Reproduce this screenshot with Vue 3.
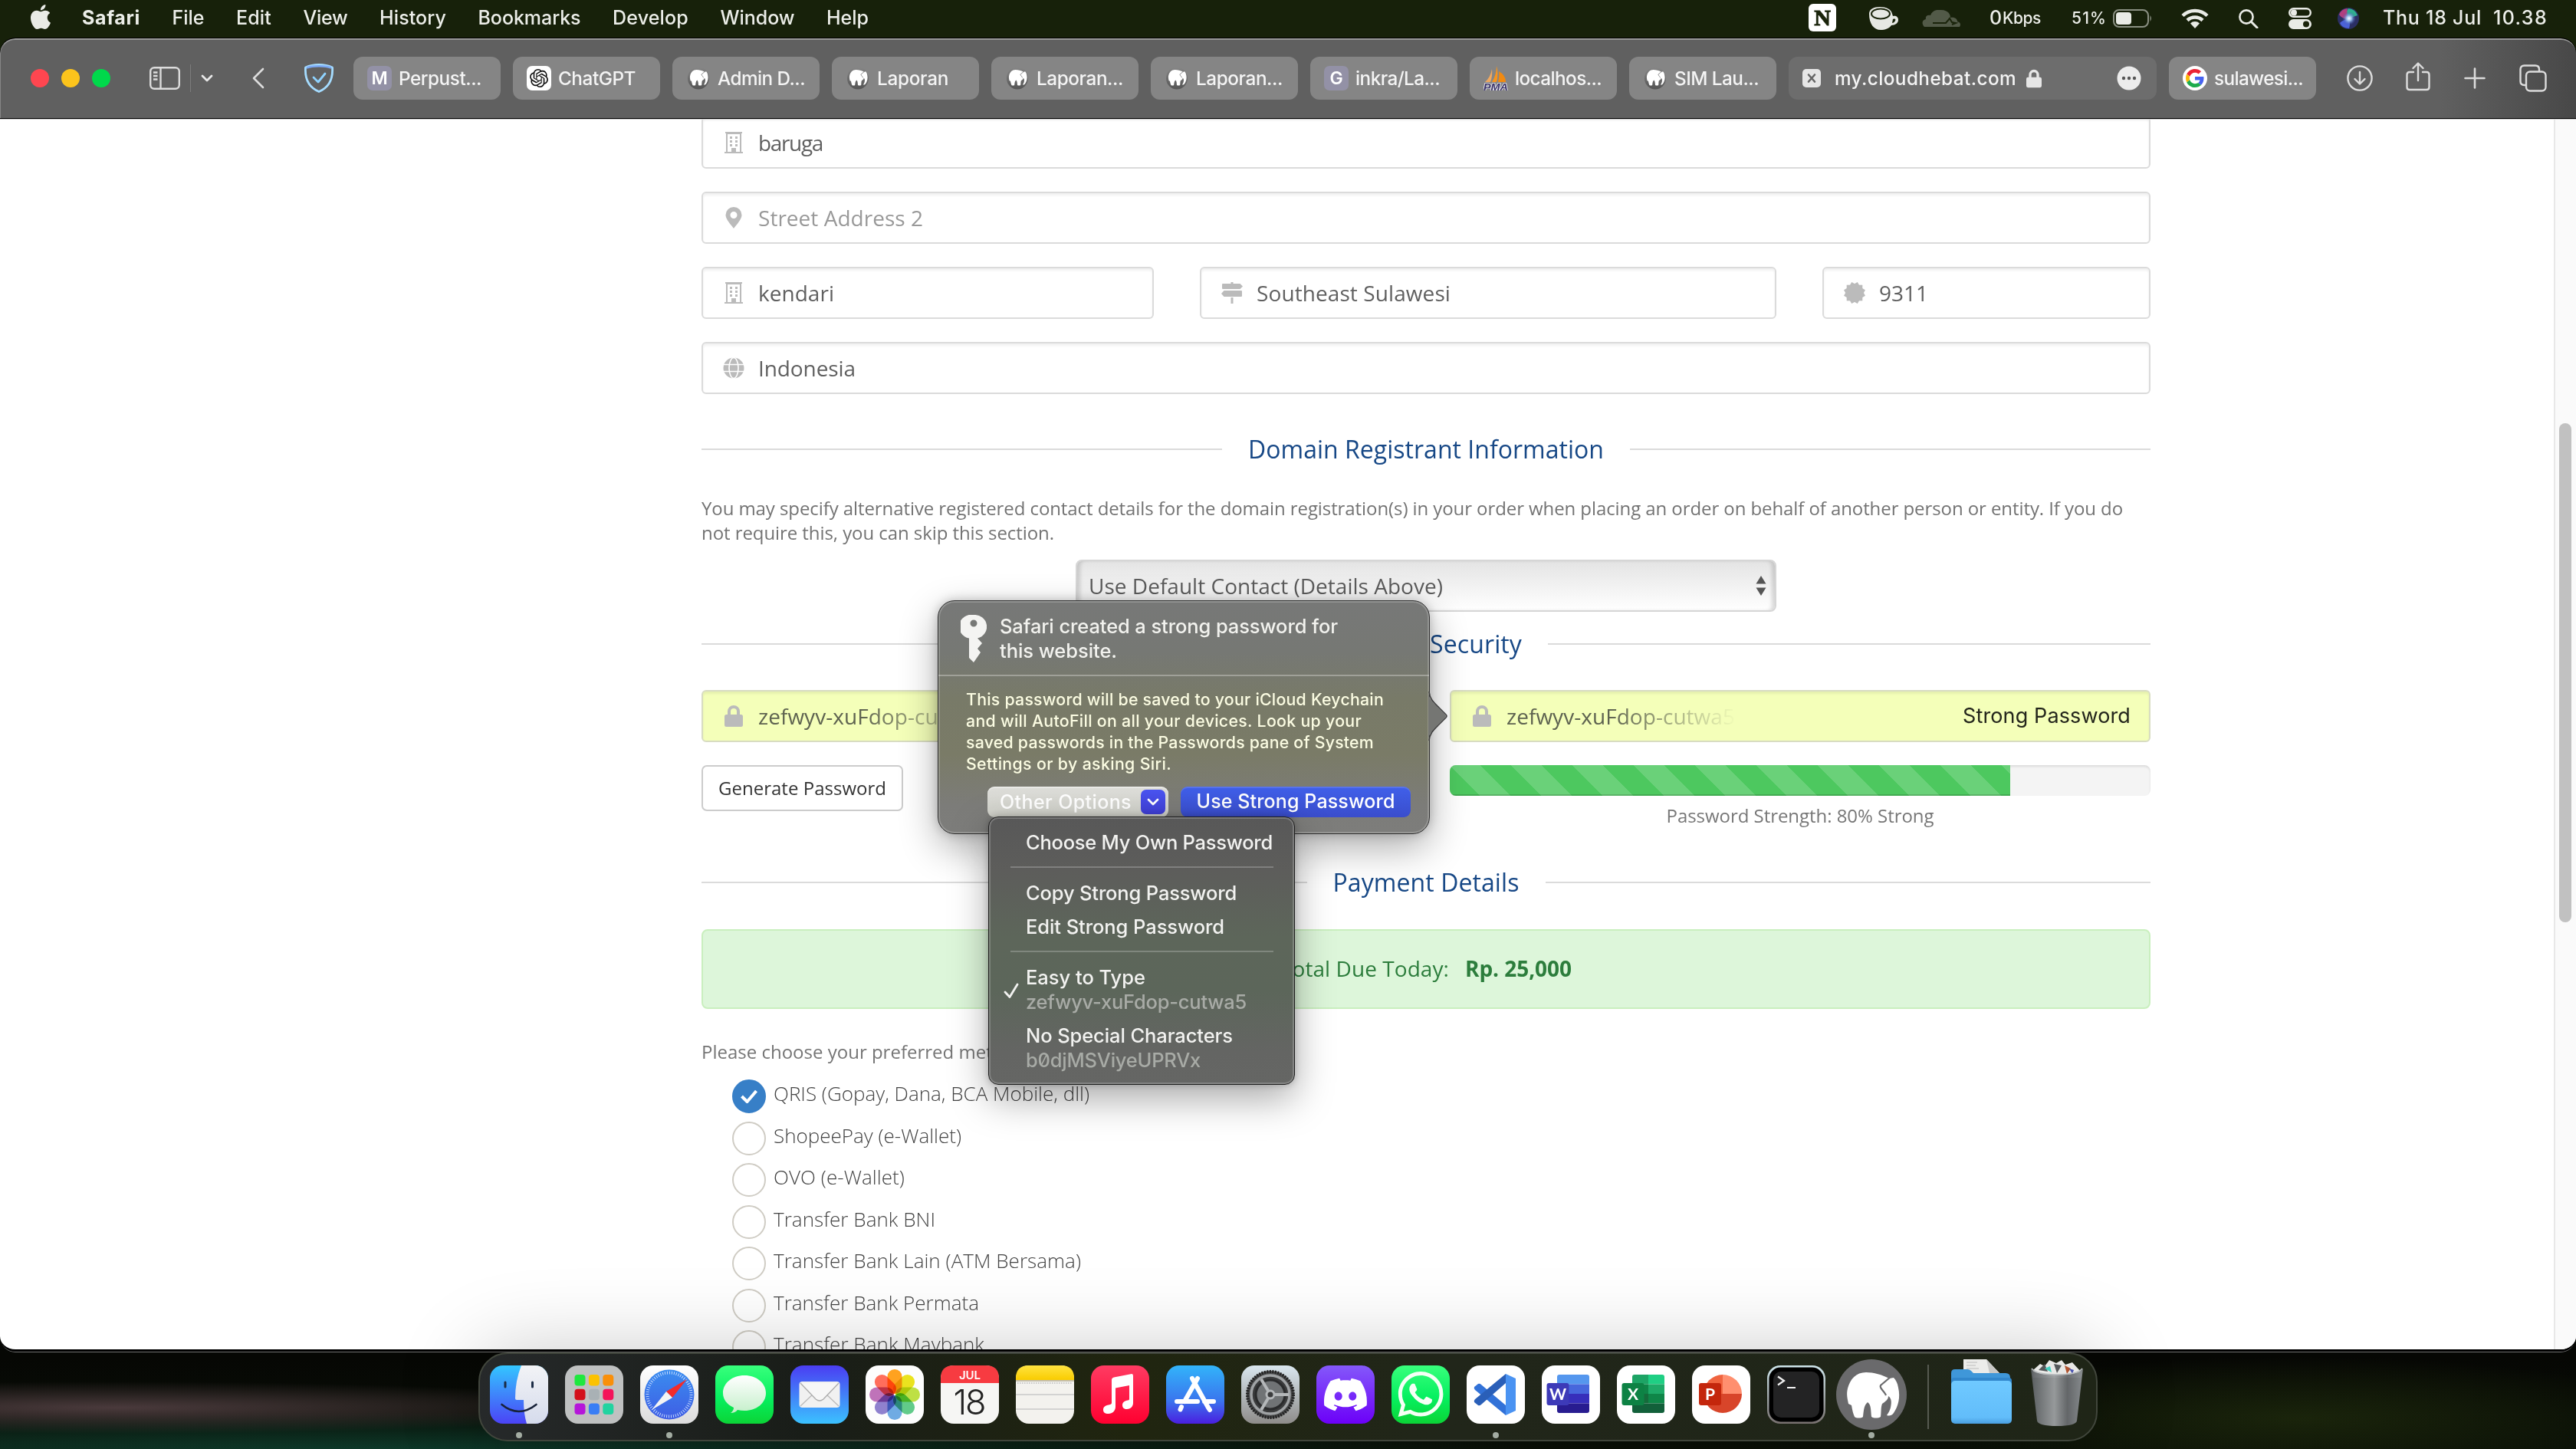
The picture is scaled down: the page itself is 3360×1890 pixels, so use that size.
<script setup>
// Tracks a text run out to a fixed width so that neighbouring items stay aligned
const vFit = {
  mounted(el, { value }) {
    el.style.letterSpacing = '0px'
    const natural = el.getBoundingClientRect().width
    const count = el.textContent.length
    el.style.letterSpacing = `${(value - natural) / count}px`
    el.style.width = `${value}px`
  }
}

const menus = [
  ['File', 42], ['Edit', 46], ['View', 58], ['History', 87], ['Bookmarks', 134],
  ['Develop', 99], ['Window', 97], ['Help', 55]
]

const tabs = [
  { icon: 'letter', letter: 'M', label: 'Perpust...', w: 108 },
  { icon: 'openai', label: 'ChatGPT', w: 101 },
  { icon: 'elephant', label: 'Admin D...', w: 114 },
  { icon: 'elephant', label: 'Laporan', w: 93 },
  { icon: 'elephant', label: 'Laporan...', w: 113 },
  { icon: 'elephant', label: 'Laporan...', w: 113 },
  { icon: 'letter', letter: 'G', label: 'inkra/La...', w: 110 },
  { icon: 'pma', label: 'localhos...', w: 113 },
  { icon: 'elephant', label: 'SIM Lau...', w: 110 }
]

const methods = [
  ['QRIS (Gopay, Dana, BCA Mobile, dll)', 412],
  ['ShopeePay (e-Wallet)', 245],
  ['OVO (e-Wallet)', 171],
  ['Transfer Bank BNI', 211],
  ['Transfer Bank Lain (ATM Bersama)', 401],
  ['Transfer Bank Permata', 268],
  ['Transfer Bank Maybank', 275]
]

const launchpad = ['#1ee83e', '#fcc200', '#f98f0a', '#d3101a', '#a9b1b5', '#f4135a', '#b516d9', '#3a7ef5', '#21d3a0']
const petals = ['#ff9500', '#e8e000', '#b5dc2a', '#4cc47a', '#5b9fe0', '#7f6fc8', '#b65fb0', '#ff5a45']
</script>

<template>
  <div class="desktop">
    <svg class="defs" width="0" height="0">
      <defs>
        <linearGradient id="gSilver" x2="0" y2="1"><stop stop-color="#d9e6ee" /><stop offset="1" stop-color="#8e8c8a" /></linearGradient>
        <linearGradient id="gFinder" x2="0" y2="1"><stop stop-color="#33c6ff" /><stop offset="1" stop-color="#4b43f6" /></linearGradient>
        <linearGradient id="gFace" x2="0" y2="1"><stop stop-color="#f2f3f6" /><stop offset="1" stop-color="#d5dbec" /></linearGradient>
        <linearGradient id="gWhite" x2="0" y2="1"><stop stop-color="#fff" /><stop offset="1" stop-color="#dcdcdc" /></linearGradient>
        <linearGradient id="gCompass" x2="0" y2="1"><stop stop-color="#3a8df0" /><stop offset="1" stop-color="#3f5de4" /></linearGradient>
        <linearGradient id="gGreen" x2="0" y2="1"><stop stop-color="#38ff7c" /><stop offset=".55" stop-color="#06f060" /><stop offset="1" stop-color="#0bd436" /></linearGradient>
        <linearGradient id="gBubble" x2="0" y2="1"><stop stop-color="#fff" /><stop offset="1" stop-color="#c4efca" /></linearGradient>
        <linearGradient id="gMail" x2="0" y2="1"><stop stop-color="#4a3df2" /><stop offset="1" stop-color="#3bc2ff" /></linearGradient>
        <linearGradient id="gYellow" x2="0" y2="1"><stop stop-color="#ffe340" /><stop offset="1" stop-color="#f9cc00" /></linearGradient>
        <linearGradient id="gMusic" x2="0" y2="1"><stop stop-color="#ff3b62" /><stop offset="1" stop-color="#ff0030" /></linearGradient>
        <linearGradient id="gStore" x2="0" y2="1"><stop stop-color="#32b4fa" /><stop offset=".6" stop-color="#3a76ee" /><stop offset="1" stop-color="#4a1ee0" /></linearGradient>
        <linearGradient id="gDiscord" x2="0" y2="1"><stop stop-color="#8458fa" /><stop offset="1" stop-color="#6c00f8" /></linearGradient>
        <linearGradient id="gTerm" x2="0" y2="1"><stop stop-color="#cfe6ec" /><stop offset="1" stop-color="#77706f" /></linearGradient>
        <linearGradient id="gFolder" x2="0" y2="1"><stop stop-color="#6fc9ff" /><stop offset=".85" stop-color="#62bdfa" /><stop offset="1" stop-color="#4a9fe0" /></linearGradient>
        <linearGradient id="gTrash"><stop stop-color="#5c6063" /><stop offset=".45" stop-color="#9b9ea0" /><stop offset=".7" stop-color="#66696c" /><stop offset="1" stop-color="#8b8f92" /></linearGradient>
        <linearGradient id="gFav" x2="0" y2="1"><stop stop-color="#868686" /><stop offset="1" stop-color="#545454" /></linearGradient>
        <radialGradient id="gSiri"><stop stop-color="#fff" /><stop offset=".35" stop-color="#9fc4ee" /><stop offset="1" stop-color="#3a4fb0" stop-opacity="0" /></radialGradient>
        <symbol id="elephant" viewBox="0 0 92 92">
          <path fill="#fff" d="M39 17C26 17 18 26 15 38c-2 8 0 14 1 20l4 2c1 6 2 11 4 15 2 2 9 2 11 0 1-8 1-15 6-19 5 3 4 12 5 19 3 2 9 2 12 0 1-6 0-12 2-17 4-3 8-5 8-10 5 3 4 10 3 15-1 4-3 7-5 10 3 1 6 1 9-3 6-9 9-20 6-33-1-6-3-10-6-13l-6 1c-9-5-20-8-30-8z" />
          <path fill="none" stroke="#6a6a6c" stroke-width="2.2" d="M71 23 58 34c-2 3 3 6 6 11l1 2" />
        </symbol>
        <symbol id="lock" viewBox="0 0 24 28"><path fill="currentColor" d="M4 12V8a8 8 0 0 1 16 0v4h1.500q2.500 0 2.500 2.500v11q0 2.500-2.500 2.500h-19Q0 28 0 25.500v-11Q0 12 2.500 12zm4 0h8V8a4 4 0 0 0-8 0z" /></symbol>
        <symbol id="building" viewBox="0 0 24 28"><path fill="#bbb" fill-rule="evenodd" d="M1 0h22v2h-1v24h2v2H0v-2h2V2H1zm3 3v23h5v-5h6v5h5V3zM7 6h3v3H7zm7 0h3v3h-3zM7 11h3v3H7zm7 0h3v3h-3zM7 16h3v3H7zm7 0h3v3h-3z" /></symbol>
      </defs>
    </svg>

    <header class="menubar">
      <svg class="apple" viewBox="0 0 24 24"><path fill="#e9ebe6" d="M12.152 6.896c-.948 0-2.415-1.078-3.96-1.04-2.04.027-3.91 1.183-4.961 3.014-2.117 3.675-.546 9.103 1.519 12.09 1.013 1.454 2.208 3.09 3.792 3.039 1.52-.065 2.09-.987 3.935-.987 1.831 0 2.35.987 3.96.948 1.637-.026 2.676-1.48 3.676-2.948 1.156-1.688 1.636-3.325 1.662-3.415-.039-.013-3.182-1.221-3.22-4.857-.026-3.04 2.48-4.494 2.597-4.559-1.429-2.09-3.623-2.324-4.39-2.376-2-.156-3.675 1.09-4.61 1.09zM15.53 3.83c.843-1.012 1.4-2.427 1.245-3.83-1.207.052-2.662.805-3.532 1.818-.78.896-1.454 2.338-1.273 3.714 1.338.104 2.715-.688 3.559-1.701" /></svg>
      <nav class="menus">
        <b v-fit="76" class="run">Safari</b>
        <span v-for="m in menus" :key="m[0]" v-fit="m[1]" class="run">{{ m[0] }}</span>
      </nav>
      <div class="status">
        <span class="notion">N</span>
        <svg class="cup" viewBox="0 0 40 30"><path fill="#e6e8e3" d="M2 9C2 3 8 0 16 0s15 3 16 9l1 3c4-1 7 1 7 5s-4 7-9 7c-3 4-8 6-14 6C8 30 2 22 2 9z" /><ellipse cx="17" cy="9" rx="12" ry="6.500" fill="none" stroke="#1a240b" stroke-width="2" /><path d="M33 16c3-1 4 0 3 2s-2 3-4 3z" fill="#1a240b" /></svg>
        <svg class="cloud" viewBox="0 0 50 22"><path fill="#525a48" d="M3 22c-4-4-3-9 2-10C4 8 7 6 11 7 13 1 19-1 25 0c8 0 12 5 12 10 6-1 9 2 9 5 4 1 5 4 3 7z" /><path d="M14 17h17l5-6 3 5 5 1-5 2" fill="none" stroke="#1a240b" stroke-width="2" /></svg>
        <span class="net"><span v-fit="17" class="run">0</span><small v-fit="50" class="run">Kbps</small></span>
        <small v-fit="46" class="run pct">51%</small>
        <svg class="battery" viewBox="0 0 52 24"><rect x="1" y="1" width="45" height="22" rx="7" fill="none" stroke="#8a9083" stroke-width="2" /><rect x="4" y="4" width="20" height="16" rx="4" fill="#e9ebe6" /><path d="M48.500 8q3 4 0 8z" fill="#8a9083" /></svg>
        <svg class="wifi" viewBox="0 0 36 26"><g fill="none" stroke="#e9ebe6" stroke-width="4.500"><path d="M2 9.500a23 23 0 0 1 32 0" /><path d="M8 15.500a14.500 14.500 0 0 1 20 0" /></g><path d="M18 26l-6-6.500a8.500 8.500 0 0 1 12 0z" fill="#e9ebe6" /></svg>
        <svg class="search" viewBox="0 0 26 25"><circle cx="10" cy="10" r="8.600" fill="none" stroke="#e9ebe6" stroke-width="2.600" /><path d="M16 16l8 8" stroke="#e9ebe6" stroke-width="3" stroke-linecap="round" /></svg>
        <svg class="control" viewBox="0 0 30 28"><rect x="1.200" y="1.200" width="27.600" height="10.600" rx="5.300" fill="none" stroke="#e9ebe6" stroke-width="2.400" /><circle cx="7" cy="6.500" r="4" fill="#e9ebe6" /><rect y="15" width="30" height="13" rx="6.500" fill="#e9ebe6" /><circle cx="23" cy="21.500" r="4" fill="#1a240b" /></svg>
        <svg class="siri" viewBox="0 0 28 28"><circle cx="14" cy="14" r="14" fill="#2b2f63" /><path d="M14 1a13 13 0 0 1 12 9q-8 2-12 6Q8 8 14 1z" fill="#2fae8f" /><path d="M2 9a13 13 0 0 1 11-8q-2 8 2 14Q6 15 2 9z" fill="#b0407e" /><path d="M3 20q6-6 12-4 2 6 0 11-9 0-12-7z" fill="#4b62d8" /><circle cx="15" cy="14" r="9" fill="url(#gSiri)" /></svg>
        <span v-fit="129" class="run">Thu 18 Jul</span>
        <span v-fit="71" class="run time">10.38</span>
      </div>
    </header>

    <main class="window">
      <div class="toolbar">
        <div class="lights"><i class="red" /><i class="amber" /><i class="green" /></div>
        <svg class="sidebar" viewBox="0 0 40 30"><g fill="none" stroke="#dcdcdc" stroke-width="2.400"><rect x="1.200" y="1.200" width="37.600" height="27.600" rx="5" /><path d="M14.500 1v28M5 7.500h5.500M5 12h5.500M5 16.500h5.500" /></g></svg>
        <i class="bar" />
        <svg class="chev" viewBox="0 0 16 10"><path d="M2 2l6 6 6-6" fill="none" stroke="#e8e8e8" stroke-width="2.800" stroke-linecap="round" stroke-linejoin="round" /></svg>
        <svg class="back" viewBox="0 0 16 28"><path d="M14 2L2 14l12 12" fill="none" stroke="#dcdcdc" stroke-width="2.600" stroke-linecap="round" stroke-linejoin="round" /></svg>
        <svg class="shield" viewBox="0 0 40 38"><path d="M20 1.500c6 0 12 1 17.500 3.500C38.500 20 33 31 20 36.500 7 31 1.500 20 2.500 5 8 2.500 14 1.500 20 1.500z" fill="none" stroke="#a5dcff" stroke-width="2.800" stroke-linejoin="round" /><path d="M4 5.500C12 2.500 28 2.500 36 5.500" stroke="#7ba9f5" stroke-width="2.500" fill="none" /><path d="M13 18l6 6 9-11" fill="none" stroke="#8fd3ff" stroke-width="2.800" stroke-linecap="round" stroke-linejoin="round" /></svg>

        <div class="tabs">
          <div v-for="(t, i) in tabs" :key="i" class="tab">
            <span v-if="t.icon === 'letter'" class="fav letter">{{ t.letter }}</span>
            <svg v-else-if="t.icon === 'openai'" class="fav" viewBox="0 0 32 32"><rect width="32" height="32" rx="7" fill="#fff" /><path transform="translate(4 4)" fill="#111" d="M22.2819 9.8211a5.9847 5.9847 0 0 0-.5157-4.9108 6.0462 6.0462 0 0 0-6.5098-2.9A6.0651 6.0651 0 0 0 4.9807 4.1818a5.9847 5.9847 0 0 0-3.9977 2.9 6.0462 6.0462 0 0 0 .7427 7.0966 5.98 5.98 0 0 0 .511 4.9107 6.051 6.051 0 0 0 6.5146 2.9001A5.9847 5.9847 0 0 0 13.2599 24a6.0557 6.0557 0 0 0 5.7718-4.2058 5.9894 5.9894 0 0 0 3.9977-2.9001 6.0557 6.0557 0 0 0-.7475-7.0729zm-9.022 12.6081a4.4755 4.4755 0 0 1-2.8764-1.0408l.1419-.0804 4.7783-2.7582a.7948.7948 0 0 0 .3927-.6813v-6.7369l2.02 1.1686a.071.071 0 0 1 .038.052v5.5826a4.504 4.504 0 0 1-4.4945 4.4944zm-9.6607-4.1254a4.4708 4.4708 0 0 1-.5346-3.0137l.142.0852 4.783 2.7582a.7712.7712 0 0 0 .7806 0l5.8428-3.3685v2.3324a.0804.0804 0 0 1-.0332.0615L9.74 19.9502a4.4992 4.4992 0 0 1-6.1408-1.6464zM2.3408 7.8956a4.485 4.485 0 0 1 2.3655-1.9728V11.6a.7664.7664 0 0 0 .3879.6765l5.8144 3.3543-2.0201 1.1685a.0757.0757 0 0 1-.071 0l-4.8303-2.7865A4.504 4.504 0 0 1 2.3408 7.872zm16.5963 3.8558L13.1038 8.364 15.1192 7.2a.0757.0757 0 0 1 .071 0l4.8303 2.7913a4.4944 4.4944 0 0 1-.6765 8.1042v-5.6772a.79.79 0 0 0-.407-.667zm2.0107-3.0231l-.142-.0852-4.7735-2.7818a.7759.7759 0 0 0-.7854 0L9.409 9.2297V6.8974a.0662.0662 0 0 1 .0284-.0615l4.8303-2.7866a4.4992 4.4992 0 0 1 6.6802 4.66zM8.3065 12.863l-2.02-1.1638a.0804.0804 0 0 1-.038-.0567V6.0742a4.4992 4.4992 0 0 1 7.3757-3.4537l-.142.0805L8.704 5.459a.7948.7948 0 0 0-.3927.6813zm1.0976-2.3654l2.602-1.4998 2.6069 1.4998v2.9994l-2.5974 1.4997-2.6067-1.4997Z" /></svg>
            <svg v-else-if="t.icon === 'elephant'" class="fav" viewBox="0 0 32 32"><ellipse cx="16" cy="16" rx="14" ry="14.500" fill="url(#gFav)" /><use href="#elephant" x="0" y="-1" width="32" height="32" /></svg>
            <svg v-else class="fav" viewBox="0 0 32 32"><path d="M11 4q1 9-2 17H2Q9 15 11 4z" fill="#f0a860" /><path d="M17 0q3 10 0 21h-6Q17 12 17 0z" fill="#f7941d" /><path d="M20 7q9 5 9 14H19q2-8 1-14z" fill="#f28a10" /><text x="0" y="31.500" textLength="32" lengthAdjust="spacingAndGlyphs" font-family="Liberation Sans, sans-serif" font-weight="700" font-style="italic" font-size="12.500" fill="#3b3468" stroke="#e6e6ee" stroke-width="1.600" paint-order="stroke">PMA</text></svg>
            <span v-fit="t.w" class="run">{{ t.label }}</span>
          </div>
          <div class="tab address">
            <svg class="close" viewBox="0 0 24 24"><rect width="24" height="24" rx="5" fill="#e6e6e6" /><path d="M8 7.500l8 9M16 7.500l-8 9" stroke="#666" stroke-width="2.600" stroke-linecap="round" /></svg>
            <span v-fit="237" class="run">my.cloudhebat.com</span>
            <svg class="padlock"><use href="#lock" /></svg>
            <svg class="more" viewBox="0 0 32 32"><circle cx="16" cy="16" r="15.500" fill="#ececec" /><g fill="#555"><circle cx="9" cy="16" r="2.200" /><circle cx="16" cy="16" r="2.200" /><circle cx="23" cy="16" r="2.200" /></g></svg>
          </div>
          <div class="tab">
            <svg class="fav" viewBox="0 0 32 32"><circle cx="16" cy="16" r="16" fill="#fff" /><g transform="translate(4 4) scale(.5)"><path fill="#ea2335" d="M24 9.500c3.540 0 6.710 1.220 9.210 3.600l6.850-6.850C35.900 2.380 30.470 0 24 0 14.620 0 6.510 5.380 2.560 13.220l7.980 6.190C12.430 13.720 17.740 9.500 24 9.500z" /><path fill="#4863f0" d="M46.980 24.550c0-1.570-.15-3.090-.38-4.550H24v9.020h12.940c-.58 2.960-2.260 5.480-4.780 7.180l7.730 6c4.510-4.180 7.090-10.360 7.090-17.650z" /><path fill="#fbb80a" d="M10.530 28.590c-.48-1.450-.76-2.990-.76-4.590s.27-3.140.76-4.590l-7.980-6.190C.92 16.460 0 20.120 0 24c0 3.880.92 7.540 2.560 10.780l7.970-6.190z" /><path fill="#1cab4c" d="M24 48c6.480 0 11.930-2.130 15.890-5.810l-7.730-6c-2.150 1.450-4.920 2.300-8.160 2.300-6.260 0-11.570-4.220-13.470-9.910l-7.980 6.190C6.510 42.620 14.620 48 24 48z" /></g></svg>
            <span v-fit="116" class="run">sulawesi...</span>
          </div>
        </div>

        <div class="actions">
          <svg width="34" height="34" viewBox="0 0 34 34"><g fill="none" stroke="#dcdcdc" stroke-width="2.400" stroke-linecap="round" stroke-linejoin="round"><circle cx="17" cy="17" r="15.600" /><path d="M17 9v15M10.500 18l6.500 6.500 6.500-6.500" /></g></svg>
          <svg class="share" width="32" height="38" viewBox="0 0 32 38"><g fill="none" stroke="#dcdcdc" stroke-width="2.400" stroke-linecap="round" stroke-linejoin="round"><path d="M10 13H5q-3.500 0-3.500 3.500v16Q1.500 36 5 36h22q3.500 0 3.500-3.500v-16Q30.500 13 27 13h-5M16 24V2M9.500 8L16 1.500 22.500 8" /></g></svg>
          <svg width="28" height="28" viewBox="0 0 28 28"><path d="M14 1.500v25M1.500 14h25" stroke="#dcdcdc" stroke-width="2.600" stroke-linecap="round" /></svg>
          <svg width="36" height="36" viewBox="0 0 36 36"><g fill="none" stroke="#dcdcdc" stroke-width="2.400"><rect x="9" y="9.500" width="25.500" height="25" rx="5" /><path d="M9 27H6.500Q1.500 27 1.500 22V6.500q0-5 5-5H21q5 0 5 5v3" /></g></svg>
        </div>
      </div>

      <div class="page">
        <div class="form">
          <div class="field"><svg class="ico"><use href="#building" /></svg><span v-fit="84" class="run">baruga</span></div>
          <div class="field"><svg class="ico" viewBox="0 0 24 28"><path fill="#bbb" fill-rule="evenodd" d="M12 0a10.500 10.500 0 0 1 10.500 10.500C22.500 16 15 24 12 28 9 24 1.500 16 1.500 10.500A10.500 10.500 0 0 1 12 0zm0 6a4.500 4.500 0 1 0 0 9 4.500 4.500 0 0 0 0-9z" /></svg><span v-fit="215" class="run hint">Street Address 2</span></div>
          <div class="triple">
            <div class="field"><svg class="ico"><use href="#building" /></svg><span v-fit="99" class="run">kendari</span></div>
            <div class="field"><svg class="ico wide" viewBox="0 0 28 28"><path fill="#bbb" d="M12.500 0h3v2h9l3.500 3.500L24.500 9H2Q1 9 1 8V3q0-1 1-1h10.500zM3.500 11H26q1 0 1 1v6q0 1-1 1H3.500L0 15zM12.500 20h3v8h-3z" /></svg><span v-fit="253" class="run">Southeast Sulawesi</span></div>
            <div class="field"><svg class="ico wide" viewBox="-14 -14 28 28"><g fill="#bbb"><rect x="-10.300" y="-10.300" width="20.600" height="20.600" /><rect x="-10.300" y="-10.300" width="20.600" height="20.600" transform="rotate(30)" /><rect x="-10.300" y="-10.300" width="20.600" height="20.600" transform="rotate(60)" /></g></svg><span v-fit="64" class="run">9311</span></div>
          </div>
          <div class="field"><svg class="ico wide" viewBox="0 0 28 28"><circle cx="14" cy="14" r="13.500" fill="#bbb" /><g fill="none" stroke="#fff" stroke-width="1.600"><ellipse cx="14" cy="14" rx="6" ry="13.500" /><path d="M0 9.500h28M0 18.500h28" /></g></svg><span v-fit="127" class="run">Indonesia</span></div>

          <div class="heading h1"><i /><span v-fit="464" class="run">Domain Registrant Information</span><i /></div>
          <div class="para">
            <span v-fit="1854" class="run">You may specify alternative registered contact details for the domain registration(s) in your order when placing an order on behalf of another person or entity. If you do</span>
            <span v-fit="460" class="run">not require this, you can skip this section.</span>
          </div>
          <div class="select"><span v-fit="462" class="run">Use Default Contact (Details Above)</span><svg width="14" height="26" viewBox="0 0 14 26"><path d="M7 0l6.500 10.500H.5zM7 26L.5 15.500h13z" fill="#555" /></svg></div>

          <div class="heading h2"><i /><span v-fit="250" class="run">Account Security</span><i /></div>
          <div class="double">
            <div class="field key"><svg class="ico"><use href="#lock" /></svg><span v-fit="298" class="run faded">zefwyv-xuFdop-cutwa5</span></div>
            <div class="field key"><svg class="ico"><use href="#lock" /></svg><span v-fit="298" class="run faded">zefwyv-xuFdop-cutwa5</span><span v-fit="219" class="run strong">Strong Password</span></div>
          </div>
          <div class="double strength">
            <div><button class="generate"><span v-fit="219" class="run">Generate Password</span></button></div>
            <div class="meter">
              <div class="track"><div class="fill" :style="{ width: '80%' }" /></div>
              <span v-fit="349" class="run">Password Strength: 80% Strong</span>
            </div>
          </div>

          <div class="heading h3"><i /><span v-fit="243" class="run">Payment Details</span><i /></div>
          <div class="due"><span v-fit="220" class="run">Total Due Today:</span><b v-fit="139" class="run">Rp. 25,000</b></div>
          <div class="choose">Please choose your preferred method of payment.</div>
          <div v-for="(m, i) in methods" :key="m[0]" class="method">
            <span class="radio" :class="{ on: i === 0 }"><svg v-if="i === 0" width="24" height="18" viewBox="0 0 24 18"><path d="M2.500 9l7 7L21.500 2" fill="none" stroke="#fff" stroke-width="4" /></svg></span>
            <span v-fit="m[1]" class="run">{{ m[0] }}</span>
          </div>
        </div>
        <div class="scroller"><i /></div>
      </div>
    </main>

    <section class="popover">
      <svg class="pointer" viewBox="0 0 26 64"><path d="M0 0c1 10 6 14 13 21l9 9q2 2 0 4l-9 9C6 50 1 54 0 64z" fill="#757673" /><path d="M1 0c1 10 6 14 13 21l9 9q2 2 0 4l-9 9C7 50 2 54 1 64" fill="none" stroke="#3c3c3c" stroke-width="1.500" /></svg>
      <div class="phead">
        <svg width="34" height="62" viewBox="0 0 34 62"><path fill="#f4f4f2" fill-rule="evenodd" d="M17 0a16 15.500 0 0 1 5 30.500l6 6.500-6 7 4 5-9 13-6-6V30.500A16 15.500 0 0 1 17 0zm0 6.500a4.500 4.500 0 1 0 0 9 4.500 4.500 0 0 0 0-9z" /></svg>
        <div><span v-fit="441" class="run">Safari created a strong password for</span><span v-fit="153" class="run">this website.</span></div>
      </div>
      <div class="pbody">
        <span v-fit="545" class="run">This password will be saved to your iCloud Keychain</span>
        <span v-fit="516" class="run">and will AutoFill on all your devices. Look up your</span>
        <span v-fit="532" class="run">saved passwords in the Passwords pane of System</span>
        <span v-fit="268" class="run">Settings or by asking Siri.</span>
      </div>
      <div class="pbuttons">
        <div class="other"><span v-fit="172" class="run">Other Options</span><em><svg width="16" height="10" viewBox="0 0 16 10"><path d="M2 2l6 6 6-6" fill="none" stroke="#fff" stroke-width="2.800" stroke-linecap="round" stroke-linejoin="round" /></svg></em></div>
        <div class="use"><span v-fit="259" class="run">Use Strong Password</span></div>
      </div>
    </section>

    <section class="menu">
      <div class="item"><span v-fit="322" class="run">Choose My Own Password</span></div>
      <hr>
      <div class="item"><span v-fit="275" class="run">Copy Strong Password</span></div>
      <div class="item"><span v-fit="259" class="run">Edit Strong Password</span></div>
      <hr>
      <div class="item two">
        <svg class="tick" width="20" height="20" viewBox="0 0 20 20"><path d="M2 12l6 6.500L18 2" fill="none" stroke="#f2f2f0" stroke-width="2.800" stroke-linecap="round" stroke-linejoin="round" /></svg>
        <span v-fit="156" class="run">Easy to Type</span><span v-fit="288" class="run dim">zefwyv-xuFdop-cutwa5</span>
      </div>
      <div class="item two"><span v-fit="270" class="run">No Special Characters</span><span v-fit="228" class="run dim zero">b0djMSViyeUPRVx</span></div>
    </section>

    <footer class="dock">
      <div class="app on"><svg viewBox="0 0 76 76"><clipPath id="cR"><rect width="76" height="76" rx="17" /></clipPath><g clip-path="url(#cR)"><rect width="76" height="76" fill="url(#gFinder)" /><path d="M41 0Q33 20 33 43q0 2 2 2h9q0 18 4 31h28V0z" fill="url(#gFace)" /><path d="M20 22v6M55.500 22v6" stroke="#1b2b45" stroke-width="3" stroke-linecap="round" /><path d="M15.500 51q22 18 45 0" fill="none" stroke="#18223a" stroke-width="2.600" stroke-linecap="round" /></g></svg></div>
      <div class="app"><svg viewBox="0 0 76 76"><rect width="76" height="76" rx="17" fill="#bfc1c1" /><rect v-for="(c, i) in launchpad" :key="c" :x="12.500 + (i % 3) * 18.400" :y="12 + Math.floor(i / 3) * 18.800" width="14" height="14.500" rx="4" :fill="c" /></svg></div>
      <div class="app on"><svg viewBox="0 0 76 76"><rect width="76" height="76" rx="17" fill="url(#gWhite)" /><circle cx="38" cy="38" r="32.500" fill="url(#gCompass)" /><circle cx="38" cy="38" r="28.500" fill="none" stroke="#cfe2ff" stroke-width="4" stroke-dasharray=".9 2.080" /><path d="M61 18L34 34l8 8z" fill="#f32b2b" /><path d="M15 58l19-24 8 8z" fill="#f4f4f4" /></svg></div>
      <div class="app"><svg viewBox="0 0 76 76"><rect width="76" height="76" rx="17" fill="url(#gGreen)" /><path d="M38 13c16 0 28 10 28 23S54 59 38 59q-5 0-9-1-3 4-9 4 4-3 4-7C15 51 10 44 10 36c0-13 12-23 28-23z" fill="url(#gBubble)" /></svg></div>
      <div class="app"><svg viewBox="0 0 76 76"><rect width="76" height="76" rx="17" fill="url(#gMail)" /><rect x="11.500" y="21" width="53" height="34" rx="4" fill="#f1f1f1" /><path d="M13 53l18-17M63 53L45 36" stroke="#b9b9b9" stroke-width="1.200" /><path d="M13 23l20 21q5 4 10 0l20-21" fill="#f7f7f7" stroke="#adadad" stroke-width="1.400" /></svg></div>
      <div class="app"><svg viewBox="0 0 76 76"><rect width="76" height="76" rx="17" fill="#fdfdfd" /><g class="petals"><rect v-for="(c, i) in petals" :key="c" x="28.500" y="5" width="19" height="32" rx="9.500" :fill="c" :transform="`rotate(${i * 45} 38 38)`" /></g></svg></div>
      <div class="app"><svg viewBox="0 0 76 76"><rect width="76" height="76" rx="17" fill="#f6f6f4" /><path d="M0 23V17Q0 0 17 0h42q17 0 17 17v6z" fill="#f73b41" /><text x="38" y="18" text-anchor="middle" font-family="Inter, sans-serif" font-size="15" font-weight="600" fill="#fff">JUL</text><text x="37" y="64" text-anchor="middle" font-family="Inter, sans-serif" font-size="45" font-weight="300" letter-spacing="-2" fill="#222">18</text></svg></div>
      <div class="app"><svg viewBox="0 0 76 76"><rect width="76" height="76" rx="17" fill="#f3f2ee" /><path d="M0 19v-2Q0 0 17 0h42q17 0 17 17v2z" fill="url(#gYellow)" /><path d="M0 20h76" stroke="#b5ad98" stroke-width="1.600" /><path d="M2 23h72" stroke="#bbb" stroke-width="1.500" stroke-dasharray="1.500 1.500" /><path d="M0 38h76M0 57h76" stroke="#c9c9c9" stroke-width="1.500" /></svg></div>
      <div class="app"><svg viewBox="0 0 76 76"><rect width="76" height="76" rx="17" fill="url(#gMusic)" /><path d="M27 19q0-3 3-3.600l22-4.200q3-.6 3 2.300V49c0 5-4 8-8 8s-6-2-6-5c0-4 3-6 7-6.500 2-.4 2-1 2-2.500V26l-18 3.500V54c0 5-4 9-9 9s-7-2-7-5c0-4 3-6 7-6.500 3-.5 4-1 4-3z" fill="#fff" /></svg></div>
      <div class="app"><svg viewBox="0 0 76 76"><rect width="76" height="76" rx="17" fill="url(#gStore)" /><g stroke="#fff" stroke-width="6" stroke-linecap="round"><path d="M41 17L24 47M34 17l21 38M14 47h27M50 47h12M20 54l-1.500 3.500M55 55l2 3" /></g></svg></div>
      <div class="app"><svg viewBox="0 0 76 76"><rect width="76" height="76" rx="17" fill="url(#gSilver)" /><circle cx="38" cy="38" r="31" fill="#4a4b4c" /><circle cx="38" cy="38" r="30" fill="none" stroke="#222" stroke-width="4" stroke-dasharray="2 1.500" /><circle cx="38" cy="38" r="25" fill="#3a3b3c" stroke="#a0a3a5" stroke-width="3.500" /><circle cx="38" cy="38" r="19" fill="#707375" stroke="#2a2b2c" stroke-width="3" /><path d="M38 38h24M38 38L26 18M38 38L26 58" stroke="#b4b7b9" stroke-width="4" /><circle cx="38" cy="38" r="5" fill="#3a3b3c" stroke="#b4b7b9" stroke-width="3" /></svg></div>
      <div class="app"><svg viewBox="0 0 76 76"><rect width="76" height="76" rx="17" fill="url(#gDiscord)" /><path transform="translate(10 10) scale(2.330)" fill="#fff" d="M20.317 4.3698a19.7913 19.7913 0 00-4.8851-1.5152.0741.0741 0 00-.0785.0371c-.211.3753-.4447.8648-.6083 1.2495-1.8447-.2762-3.68-.2762-5.4868 0-.1636-.3933-.4058-.8742-.6177-1.2495a.077.077 0 00-.0785-.037 19.7363 19.7363 0 00-4.8852 1.515.0699.0699 0 00-.0321.0277C.5334 9.0458-.319 13.5799.0992 18.0578a.0824.0824 0 00.0312.0561c2.0528 1.5076 4.0413 2.4228 5.9929 3.0294a.0777.0777 0 00.0842-.0276c.4616-.6304.8731-1.2952 1.226-1.9942a.076.076 0 00-.0416-.1057c-.6528-.2476-1.2743-.5495-1.8722-.8923a.077.077 0 01-.0076-.1277c.1258-.0943.2517-.1923.3718-.2914a.0743.0743 0 01.0776-.0105c3.9278 1.7933 8.18 1.7933 12.0614 0a.0739.0739 0 01.0785.0095c.1202.099.246.1981.3728.2924a.077.077 0 01-.0066.1276 12.2986 12.2986 0 01-1.873.8914.0766.0766 0 00-.0407.1067c.3604.698.7719 1.3628 1.225 1.9932a.076.076 0 00.0842.0286c1.961-.6067 3.9495-1.5219 6.0023-3.0294a.077.077 0 00.0313-.0552c.5004-5.177-.8382-9.6739-3.5485-13.6604a.061.061 0 00-.0312-.0286zM8.02 15.3312c-1.1825 0-2.1569-1.0857-2.1569-2.419 0-1.3332.9555-2.4189 2.157-2.4189 1.2108 0 2.1757 1.0952 2.1568 2.419 0 1.3332-.9555 2.4189-2.1569 2.4189zm7.9748 0c-1.1825 0-2.1569-1.0857-2.1569-2.419 0-1.3332.9554-2.4189 2.1569-2.4189 1.2108 0 2.1757 1.0952 2.1568 2.419 0 1.3332-.946 2.4189-2.1568 2.4189Z" /></svg></div>
      <div class="app"><svg viewBox="0 0 76 76"><rect width="76" height="76" rx="17" fill="url(#gGreen)" /><path transform="translate(8.500 8) scale(2.460)" fill="#f6fff6" d="M17.472 14.382c-.297-.149-1.758-.867-2.03-.967-.273-.099-.471-.148-.67.15-.197.297-.767.966-.94 1.164-.173.199-.347.223-.644.075-.297-.15-1.255-.463-2.39-1.475-.883-.788-1.48-1.761-1.653-2.059-.173-.297-.018-.458.13-.606.134-.133.298-.347.446-.52.149-.174.198-.298.298-.497.099-.198.05-.371-.025-.52-.075-.149-.669-1.612-.916-2.207-.242-.579-.487-.5-.669-.51-.173-.008-.371-.01-.57-.01-.198 0-.52.074-.792.372-.272.297-1.040 1.016-1.040 2.479 0 1.462 1.065 2.875 1.213 3.074.149.198 2.096 3.200 5.077 4.487.709.306 1.262.489 1.694.625.712.227 1.360.195 1.871.118.571-.085 1.758-.719 2.006-1.413.248-.694.248-1.289.173-1.413-.074-.124-.272-.198-.57-.347m-5.421 7.403h-.004a9.870 9.870 0 01-5.031-1.378l-.361-.214-3.741.982.998-3.648-.235-.374a9.860 9.860 0 01-1.510-5.260c.001-5.450 4.436-9.884 9.888-9.884 2.640 0 5.122 1.030 6.988 2.898a9.825 9.825 0 012.893 6.994c-.003 5.450-4.437 9.884-9.885 9.884m8.413-18.297A11.815 11.815 0 0012.050 0C5.495 0 .16 5.335.157 11.892c0 2.096.547 4.142 1.588 5.945L.057 24l6.305-1.654a11.882 11.882 0 005.683 1.448h.005c6.554 0 11.890-5.335 11.893-11.893a11.821 11.821 0 00-3.480-8.413Z" /></svg></div>
      <div class="app on"><svg viewBox="0 0 76 76"><rect width="76" height="76" rx="17" fill="#fff" /><path d="M10 28l5-4q2-1 4 1l32 27v13L11 32q-2-2-1-4z" fill="#3272d8" /><path d="M10 48l5 4q2 1 4-1l32-28V11L11 44q-2 2-1 4z" fill="#2a5fb8" /><path d="M51 11l13 6v42l-13 6z" fill="#4a93f2" /></svg></div>
      <div class="app"><svg viewBox="0 0 76 76"><rect width="76" height="76" rx="17" fill="#fff" /><path d="M20 24.500V15q0-3 3-3h36q3 0 3 3v9.500z" fill="#5597ee" /><path d="M20 24.500h42V37H20z" fill="#4767dc" /><path d="M20 37h42v12.500H20z" fill="#372fbb" /><path d="M20 49.500h42V59q0 3-3 3H23q-3 0-3-3z" fill="#281c90" /><rect x="6.500" y="23" width="29" height="29" rx="3" fill="#3d3ab8" /><text x="21" y="45" text-anchor="middle" font-family="Lato, sans-serif" font-weight="700" font-size="21" fill="#fff">W</text></svg></div>
      <div class="app"><svg viewBox="0 0 76 76"><rect width="76" height="76" rx="17" fill="#fff" /><path d="M20 24.500V15q0-3 3-3h18v12.500z" fill="#1da465" /><path d="M41 12h18q3 0 3 3v9.500H41z" fill="#1fcf84" /><path d="M20 24.500h21V37H20z" fill="#0f8447" /><path d="M41 24.500h21V37H41z" fill="#1eaa68" /><path d="M20 37h21v12.500H20z" fill="#156b3b" /><path d="M41 37h21v12.500H41z" fill="#0f8648" /><path d="M20 49.500h42V59q0 3-3 3H23q-3 0-3-3z" fill="#12603a" /><rect x="6.500" y="23" width="29" height="29" rx="3" fill="#0d8244" /><text x="21" y="45" text-anchor="middle" font-family="Lato, sans-serif" font-weight="700" font-size="21" fill="#fff">X</text></svg></div>
      <div class="app"><svg viewBox="0 0 76 76"><rect width="76" height="76" rx="17" fill="#fff" /><path d="M40 12a25 25 0 0 0-25 25h25z" fill="#f0643f" /><path d="M40 12a25 25 0 0 1 25 25H40z" fill="#ff8f6f" /><path d="M15 37a25 25 0 0 0 50 0z" fill="#d8452a" /><rect x="9" y="23" width="29" height="29" rx="3" fill="#c4260c" /><text x="23.500" y="45" text-anchor="middle" font-family="Lato, sans-serif" font-weight="700" font-size="21" fill="#fff">P</text></svg></div>
      <div class="app"><svg viewBox="0 0 76 76"><rect width="76" height="76" rx="17" fill="url(#gTerm)" /><rect x="2.500" y="2.500" width="71" height="71" rx="15" fill="#000" /><rect x="8" y="8" width="60" height="60" rx="10" fill="#232324" /><path d="M14 14.500l8 5.500-8 5.500M26 29h11" fill="none" stroke="#f2f2f2" stroke-width="2.200" /></svg></div>
      <div class="app on"><svg class="big" viewBox="0 0 92 92"><circle cx="46" cy="46" r="46" fill="#6a6a6c" /><use href="#elephant" width="92" height="92" /></svg></div>
      <i class="divider" />
      <div class="app folder"><svg viewBox="0 0 80 84"><path d="M16 0h30l17 18v12H16z" fill="#ececea" /><path d="M46 0l17 18H50z" fill="#c9c9c7" /><path d="M20 4h14M20 8h12M20 12h16" stroke="#bbb" stroke-width="1" /><path d="M0 22V18q0-5 5-5h16q3 0 5 2l3 3h42q6 0 6 6v10H0z" fill="#3f97d9" /><path d="M0 36V28q0-4 4-4h71q4 0 4 4v8z" fill="#3287cc" /><rect y="28" width="79" height="56" rx="5" fill="url(#gFolder)" /></svg></div>
      <div class="app trash"><svg viewBox="0 0 68 88"><path d="M3 14L12 6l6 3 6-8 9 4 7-4 5 6 9-3 11 12v8H3z" fill="#e8e8e6" /><path d="M10 14l8-8 4 10zM30 6l10 2-6 10z" fill="#55585a" /><path d="M18 12l7-3 2 8z" fill="#3fd0c0" /><path d="M44 8l8 4-5 7z" fill="#b0542f" /><path d="M50 12l6 2-2 5z" fill="#4b54b0" /><path d="M0 12q4 8 34 8t34-8l-8 68q-1 7-26 7T8 80z" fill="url(#gTrash)" opacity=".96" /><path d="M1 12q6 8 33 8t33-8" fill="none" stroke="#b8bcbe" stroke-width="1.600" /></svg></div>
    </footer>
  </div>
</template>

<style>
body { margin: 0; background: #0b0f06; overflow: hidden; }
</style>

<style scoped>
* { box-sizing: border-box; }
.desktop {
  position: relative; width: 3360px; height: 1890px; overflow: hidden;
  display: flex; flex-direction: column;
  font-family: Inter, "Liberation Sans", sans-serif;
  background:
    radial-gradient(ellipse 700px 34px at 150px 1836px, #4a3a3c, transparent),
    radial-gradient(ellipse 1500px 50px at 500px 1892px, #0d3a2a, transparent),
    radial-gradient(ellipse 500px 80px at 3000px 1850px, #1a240b, transparent),
    linear-gradient(#17210a 0, #17210a 60px, #060704 1770px, #0a1007 1890px);
}
.defs { position: absolute; }
svg { display: block; flex: none; }
.run { display: inline-block; white-space: nowrap; flex: none; }

/* menu bar */
.menubar { height: 49px; flex: none; display: flex; align-items: flex-start; justify-content: space-between; padding: 0 37px 0 37px; font-size: 25px; line-height: 47px; color: #eceee9; }
.apple { width: 32px; height: 32px; margin: 6px 38px 0 0; }
.menus { display: flex; gap: 41.500px; margin-right: auto; font-weight: 500; }
.menus b { font-weight: 700; }
.status { display: flex; font-weight: 500; }
.notion { width: 36px; height: 36px; margin: 5px 41px 0 0; border-radius: 6px; background: #fff; color: #1a240b; font: 700 30px/36px "Liberation Serif", serif; text-align: center; -webkit-text-stroke: 1px #1a240b; }
.status .cup { width: 40px; height: 30px; margin: 9px 31px 0 0; }
.status .cloud { width: 50px; height: 22px; margin: 13px 38px 0 0; }
.net { display: flex; margin-right: 40px; }
small { font-size: 21px; }
.pct { margin-right: 8px; }
.status .battery { width: 52px; height: 24px; margin: 12px 37px 0 0; }
.status .wifi { width: 36px; height: 26px; margin: 11px 39px 0 0; }
.status .search { width: 26px; height: 25px; margin: 12px 39px 0 0; }
.status .control { width: 30px; height: 28px; margin: 10px 34px 0 0; }
.status .siri { width: 28px; height: 28px; margin: 10px 31px 0 0; }
.time { margin-left: 15px; }

/* browser window */
.window { height: 1714px; flex: none; display: flex; flex-direction: column; border-radius: 20px; overflow: hidden; background: #000; border: 1px solid #000; border-width: 1px 0 3px; box-shadow: 0 2px 0 -1px #6d6d6d; }
.toolbar { height: 104px; flex: none; display: flex; align-items: center; padding: 0 38px 2px 39px; border-top: 2px solid #979797; border-left: 1px solid #858585; border-radius: 20px 20px 0 0; background: linear-gradient(90deg, #606060 0, #606060 3180px, #484848); }
.lights { display: flex; gap: 16px; }
.lights i { width: 24px; height: 24px; border-radius: 50%; }
.red { background: #ff4650; }
.amber { background: #fcc41c; }
.green { background: #00d94b; }
.sidebar { width: 40px; height: 30px; margin-left: 51px; }
.bar { width: 1px; height: 36px; margin: 0 13px; background: #7c7c7c; }
.chev { width: 16px; height: 10px; }
.back { width: 16px; height: 28px; margin-left: 51px; }
.shield { width: 40px; height: 38px; margin: 0 25px 0 51px; }
.tabs { display: flex; gap: 16px; }
.tab { width: 192px; height: 56px; flex: none; display: flex; align-items: center; padding-left: 18px; border-radius: 12px; background: #858585; color: #f4f4f4; font-size: 24.300px; font-weight: 450; }
.fav { width: 32px; height: 32px; margin-right: 9px; flex: none; }
.letter { border-radius: 7px; background: #9391a6; color: #fff; font-size: 23px; font-weight: 600; line-height: 32px; text-align: center; }
.address { width: 480px; background: #6d6d6d; }
.close { width: 24px; height: 24px; margin-right: 18px; }
.padlock { width: 20px; height: 27px; margin: 0 0 0 13px; color: #e6e6e6; }
.more { width: 32px; height: 32px; margin: 0 20px 0 auto; }
.actions { display: flex; align-items: center; gap: 44px; margin-left: auto; }
.share { margin: -4px 0 0 -1px; }

/* page */
.page { position: relative; flex: 1; margin-top: 1px; display: flex; overflow: hidden; background: #fff; border-top: 1px solid #ccc; font-family: "Open Sans", "Noto Sans", sans-serif; color: #606060; }
.form { width: 1890px; margin: -4px auto 0 915px; display: flex; flex-direction: column; flex: none; }
.form > * { flex: none; }
.field { height: 68px; flex: none; margin-bottom: 30px; display: flex; align-items: center; border: 2px solid #dbdbdb; border-radius: 6px; background: #fff; box-shadow: inset 0 3px 3px rgba(0, 0, 0, .06); font-size: 28px; line-height: 64px; }
.ico { width: 24px; height: 28px; margin: 0 20px 0 28px; color: #bbb; }
.ico.wide { width: 28px; margin: 0 18px 0 26px; }
.hint { color: #999; }
.triple { display: flex; }
.triple .field { width: 590px; margin-right: 60px; }
.triple .field:nth-child(2) { width: 752px; }
.triple .field:nth-child(3) { width: 428px; margin-right: 0; }
.heading { height: 44px; display: flex; align-items: center; gap: 34px; font-size: 32px; line-height: 44px; color: #174886; }
.heading i { flex: 1; height: 2px; background: #dbdbdb; }
.h1 { margin: 20px 0 39px; }
.h2 { margin: 20px 0 38px; }
.h3 { margin: 41px 0 39px; }
.para { height: 64px; display: flex; flex-direction: column; align-items: flex-start; font-size: 24px; line-height: 32px; color: #737373; }
.select { width: 914px; height: 68px; margin: 19px 0 0 488px; display: flex; align-items: center; justify-content: space-between; padding: 0 11px 0 15px; border: 2px solid #d6d6d6; border-radius: 8px; background: linear-gradient(#e4e4e4, #fff); box-shadow: inset -6px 0 5px -2px rgba(0, 0, 0, .14), inset 6px 0 5px -2px rgba(0, 0, 0, .14); font-size: 28px; line-height: 64px; color: #5c5c5c; }
.double { display: grid; grid-template-columns: 914px 914px; justify-content: space-between; }
.key { background: #f4ffb9; color: #5e6350; border-color: #d8dcc2; }
.faded { mask-image: linear-gradient(90deg, #000 45%, transparent 101%); }
.strong { margin: 0 24px 0 auto; font-family: Inter, sans-serif; font-size: 27px; color: #24261c; font-weight: 400; }
.generate { display: block; width: 263px; height: 60px; padding: 0; border: 2px solid #ccc; border-radius: 7px; background: #fff; font-family: inherit; font-size: 24px; line-height: 54px; color: #333; }
.strength { height: 90px; }
.track { height: 40px; border-radius: 8px; overflow: hidden; background: #f4f4f4; box-shadow: inset 0 2px 3px rgba(0, 0, 0, .1); }
.fill { height: 40px; background-color: #4dc85f; background-image: linear-gradient(45deg, rgba(255, 255, 255, .16) 25%, transparent 25%, transparent 50%, rgba(255, 255, 255, .16) 50%, rgba(255, 255, 255, .16) 75%, transparent 75%); background-size: 80px 80px; box-shadow: inset 0 -2px 0 rgba(0, 0, 0, .14); }
.meter { text-align: center; font-size: 24px; line-height: 32px; color: #777; }
.meter .run { margin-top: 10px; }
.due { height: 104px; display: flex; justify-content: center; gap: 21px; border: 2px solid #c9efbe; border-radius: 8px; background: #ddf6da; color: #2c7d3c; font-size: 28px; line-height: 99px; }
.choose { margin: 40px 0 20px; font-size: 24px; line-height: 32px; color: #757575; }
.method { height: 54.500px; display: flex; font-size: 26px; font-weight: 300; line-height: 36px; color: #444; }
.radio { width: 44px; height: 44px; margin: 0 10px 0 40px; border: 2px solid #cfccc4; border-radius: 50%; display: flex; align-items: center; justify-content: center; }
.radio.on { border-color: #377fc7; background: #377fc7; }
.scroller { width: 29px; flex: none; border-left: 2px solid #e8e8e8; background: #fafafa; padding: 396px 0 0 5px; }
.scroller i { display: block; width: 16px; height: 651px; border-radius: 8px; background: #c1c1c1; }

/* password popover */
.popover { position: absolute; left: 1223px; top: 783px; width: 642px; height: 305px; border: 1px solid #2e2e2e; border-radius: 22px; box-shadow: inset 0 0 0 2px rgba(255, 255, 255, .2), 0 18px 50px rgba(0, 0, 0, .32), 0 0 14px rgba(0, 0, 0, .22); background: linear-gradient(#777877 0, #767874 22%, #787a68 42%, #7a7b67 66%, #7c7c79 88%, #7d7d7b); color: #f2f2ee; }
.pointer { position: absolute; left: 639px; top: 118px; width: 26px; height: 64px; }
.phead { height: 98px; display: flex; border-bottom: 2px solid rgba(255, 255, 255, .3); padding: 17px 0 0 29px; font-size: 25.500px; font-weight: 450; line-height: 32px; }
.phead svg { margin: 1px 17px 0 0; }
.phead div { display: flex; flex-direction: column; align-items: flex-start; }
.pbody { display: flex; flex-direction: column; align-items: flex-start; padding: 16px 0 0 36px; font-size: 21.300px; line-height: 28px; color: #fbfce2; font-weight: 450; }
.pbuttons { display: flex; gap: 16px; margin: 16px 0 0 64px; font-size: 25px; font-weight: 500; line-height: 38px; color: #fff; }
.other { width: 236px; height: 40px; padding: 0 4px 0 16px; display: flex; align-items: center; justify-content: space-between; border-radius: 9px; background: linear-gradient(#dededa, #cfd0c8); box-shadow: inset 0 2px 0 rgba(255, 255, 255, .35); }
.other em { width: 32px; height: 32px; border-radius: 7px; display: flex; align-items: center; justify-content: center; background: linear-gradient(#4a54f0, #403fd6); }
.use { width: 300px; height: 40px; text-align: center; border-radius: 9px; background: linear-gradient(#4060ea, #3a4dcc); box-shadow: inset 0 2px 0 rgba(255, 255, 255, .12); }

.menu { position: absolute; left: 1289px; top: 1065px; width: 400px; height: 350px; padding: 9px 0 0 48px; border: 1px solid #1d1d1d; border-radius: 13px; box-shadow: inset 0 0 0 2px rgba(255, 255, 255, .2), 0 18px 50px rgba(0, 0, 0, .34), 0 0 10px rgba(0, 0, 0, .22); background: linear-gradient(#585858 0, #5d5d5b 20%, #5d665a 45%, #5c665a 65%, #646563 88%, #656664); color: #f2f2f0; font-size: 25.500px; font-weight: 450; line-height: 32px; }
.item { position: relative; height: 44px; padding-top: 8px; display: flex; flex-direction: column; align-items: flex-start; }
.item.two { height: 76px; }
.tick { position: absolute; left: -29px; top: 31px; }
.dim { color: #a8aba6; }
.zero { font-feature-settings: "zero"; }
.menu hr { width: 343px; height: 2px; margin: 11px 0 9px -20px; border: 0; background: rgba(255, 255, 255, .22); }

/* dock */
.dock { position: absolute; left: 624px; top: 1764px; width: 2112px; height: 116px; padding: 15px 0 0 13px; display: flex; border: 2px solid #41463c; border-radius: 38px; background: linear-gradient(90deg, #26292a, #191d18 20%, #20250f 40%, #21261a 60%, #1f2517); box-shadow: 0 0 110px rgba(0, 0, 0, .22); }
.app { position: relative; width: 76px; height: 76px; margin-right: 22px; flex: none; }
.app svg { width: 76px; height: 76px; }
.app.on::after { content: ""; position: absolute; left: 34px; top: 87px; width: 8px; height: 8px; border-radius: 50%; background: #a3aca2; }
.app .big { width: 92px; height: 92px; margin: -8px; }
.petals { isolation: isolate; }
.petals rect { mix-blend-mode: multiply; opacity: .88; }
.divider { width: 2px; height: 84px; margin: -1px 29px 0 13px; background: #565a50; }
.app.folder { width: 80px; margin-right: 24px; }
.app.folder svg { width: 80px; height: 84px; margin-top: -8px; }
.app.trash { width: 68px; margin-right: 0; }
.app.trash svg { width: 68px; height: 88px; margin-top: -8px; }
</style>
